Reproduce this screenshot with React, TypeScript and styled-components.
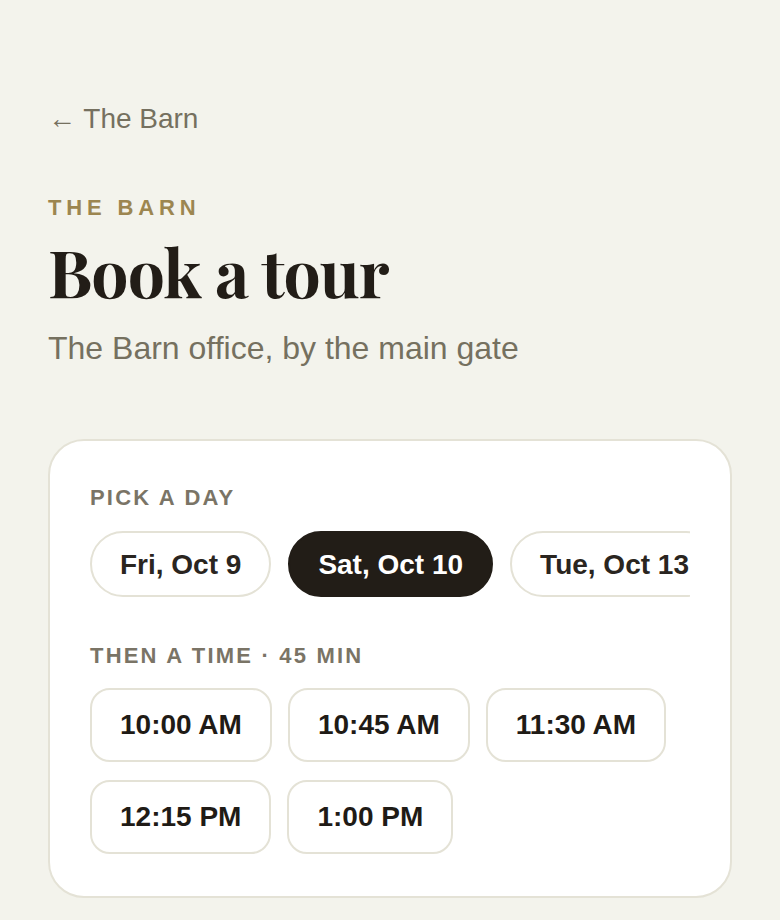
import React, { useState } from "react";
import styled, { createGlobalStyle } from "styled-components";

const days = ["Fri, Oct 9", "Sat, Oct 10", "Tue, Oct 13", "Wed, Oct 14"];
const times = ["10:00 AM", "10:45 AM", "11:30 AM", "12:15 PM", "1:00 PM"];

export default function App() {
  const [day, setDay] = useState(1);
  const [time, setTime] = useState<number | null>(null);

  return (
    <>
      <GlobalStyle />
      <Page>
        <BackLink href="#">← The Barn</BackLink>
        <Eyebrow>THE BARN</Eyebrow>
        <Title>Book a tour</Title>
        <Subtitle>The Barn office, by the main gate</Subtitle>

        <Card>
          <Label>PICK A DAY</Label>
          <DayRow>
            {days.map((d, i) => (
              <DayChip key={d} $active={i === day} onClick={() => setDay(i)}>
                {d}
              </DayChip>
            ))}
          </DayRow>

          <Label $spaced>THEN A TIME · 45 MIN</Label>
          <TimeGrid>
            {times.map((t, i) => (
              <TimeButton key={t} $active={i === time} onClick={() => setTime(i)}>
                {t}
              </TimeButton>
            ))}
          </TimeGrid>
        </Card>
      </Page>
    </>
  );
}

const GlobalStyle = createGlobalStyle`
  html, body {
    margin: 0;
    background: #f3f3ec;
  }
  body {
    font-family: "Liberation Sans", Arial, sans-serif;
    color: #221d17;
  }
`;

const Page = styled.div`
  display: flex;
  flex-direction: column;
  align-items: flex-start;
  padding: 103px 48px 24px;
`;

const BackLink = styled.a`
  font-size: 28px;
  color: #75705f;
  text-decoration: none;
  margin-bottom: 60px;
`;

const Eyebrow = styled.div`
  font-size: 22px;
  font-weight: 700;
  letter-spacing: 0.22em;
  color: #9c8650;
`;

const Title = styled.h1`
  margin: 11px 0 0;
  font-family: "Playfair Display", "Liberation Serif", serif;
  font-size: 66px;
  font-weight: 700;
  line-height: 1.2;
  color: #221d17;
  letter-spacing: -0.015em;
`;

const Subtitle = styled.p`
  margin: 19px 0 0;
  font-size: 32px;
  color: #75705f;
`;

const Card = styled.section`
  align-self: stretch;
  margin-top: 72px;
  background: #fff;
  border: 2px solid #e4e2d6;
  border-radius: 36px;
  padding: 44px 40px 42px;
  min-width: 0;
`;

const Label = styled.div<{ $spaced?: boolean }>`
  font-size: 22px;
  font-weight: 700;
  letter-spacing: 0.1em;
  color: #7a7466;
  margin-top: ${(p) => (p.$spaced ? "46px" : "0")};
  margin-bottom: ${(p) => (p.$spaced ? "19px" : "20px")};
`;

const DayRow = styled.div`
  display: flex;
  gap: 17px;
  overflow: hidden;
`;

const DayChip = styled.button<{ $active: boolean }>`
  flex: none;
  box-sizing: border-box;
  height: 66px;
  font-family: inherit;
  font-size: 28px;
  font-weight: 700;
  padding: 1px 28px 0;
  border-radius: 999px;
  border: 2px solid ${(p) => (p.$active ? "#221d17" : "#e4e2d6")};
  background: ${(p) => (p.$active ? "#221d17" : "#fff")};
  color: ${(p) => (p.$active ? "#fff" : "#2a2520")};
  cursor: pointer;
`;

const TimeGrid = styled.div`
  display: flex;
  flex-wrap: wrap;
  gap: 18px 16px;
`;

const TimeButton = styled.button<{ $active: boolean }>`
  box-sizing: border-box;
  height: 74px;
  font-family: inherit;
  font-size: 28px;
  font-weight: 700;
  padding: 0 28px;
  border-radius: 20px;
  border: 2px solid ${(p) => (p.$active ? "#221d17" : "#e4e2d6")};
  background: ${(p) => (p.$active ? "#221d17" : "#fff")};
  color: ${(p) => (p.$active ? "#fff" : "#1f1b16")};
  cursor: pointer;
`;
